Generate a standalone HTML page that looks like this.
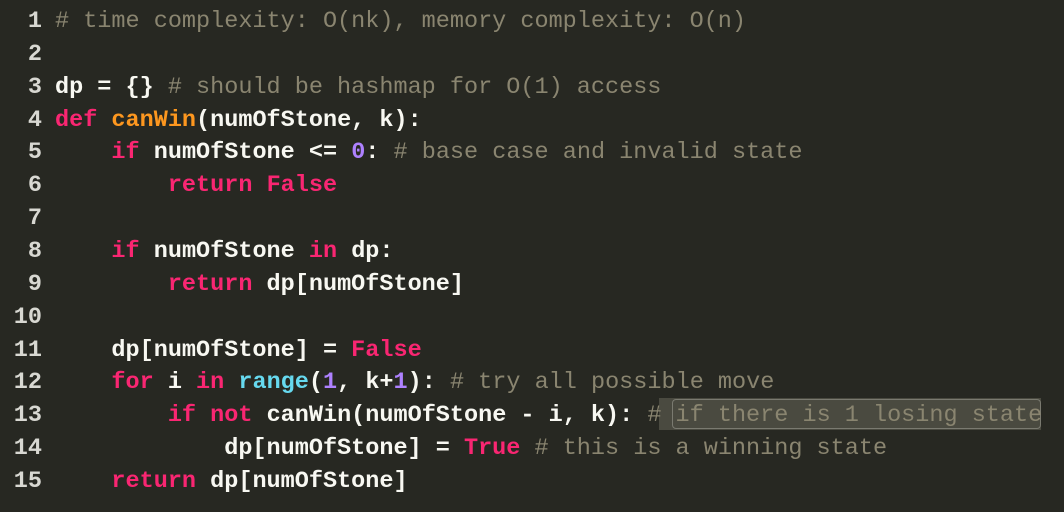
<!DOCTYPE html>
<html><head><meta charset="utf-8"><style>
body{margin:0;width:1064px;height:512px;background:#272822;overflow:hidden;position:relative}
.c{position:absolute;left:0;top:6px;font-family:"Liberation Mono",monospace;font-size:23.5px;line-height:32.86px;white-space:pre;color:#f8f8f2;font-weight:bold}
.n{display:inline-block;width:42px;text-align:right;margin-right:13px;color:#d8d8d2}
.m{color:#8a8570;font-weight:normal;font-family:"Liberation Mono","Courier New",monospace}
.k{color:#f92672}.f{color:#fd971f}.b{color:#66d9ef}.p{color:#ae81ff}
.sel{position:absolute;left:659px;top:398px;width:382px;height:32px;background:#4a4a40}
.box{position:absolute;left:672px;top:399px;width:367px;height:28px;border:1.5px solid #7a7a70;border-radius:4px}
</style></head><body>
<div class="sel"></div><div class="box"></div>
<div class="c"><span class="n">1</span><span class="m"># time complexity: O(nk), memory complexity: O(n)</span>
<span class="n">2</span>
<span class="n">3</span>dp = {} <span class="m"># should be hashmap for O(1) access</span>
<span class="n">4</span><span class="k">def</span> <span class="f">canWin</span>(numOfStone, k):
<span class="n">5</span>    <span class="k">if</span> numOfStone &lt;= <span class="p">0</span>: <span class="m"># base case and invalid state</span>
<span class="n">6</span>        <span class="k">return</span> <span class="k">False</span>
<span class="n">7</span>
<span class="n">8</span>    <span class="k">if</span> numOfStone <span class="k">in</span> dp:
<span class="n">9</span>        <span class="k">return</span> dp[numOfStone]
<span class="n">10</span>
<span class="n">11</span>    dp[numOfStone] = <span class="k">False</span>
<span class="n">12</span>    <span class="k">for</span> i <span class="k">in</span> <span class="b">range</span>(<span class="p">1</span>, k+<span class="p">1</span>): <span class="m"># try all possible move</span>
<span class="n">13</span>        <span class="k">if</span> <span class="k">not</span> canWin(numOfStone - i, k): <span class="m"># if there is 1 losing state</span>
<span class="n">14</span>            dp[numOfStone] = <span class="k">True</span> <span class="m"># this is a winning state</span>
<span class="n">15</span>    <span class="k">return</span> dp[numOfStone]</div>
</body></html>
